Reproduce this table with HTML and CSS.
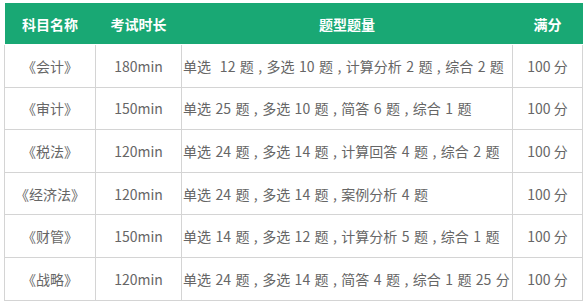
FILE: index.html
```html
<!DOCTYPE html>
<html lang="zh-CN">
<head>
<meta charset="utf-8">
<title>考试科目</title>
<link rel="stylesheet" href="styles.css">
</head>
<body>
<table class="exam">
  <colgroup>
    <col class="c1"><col class="c2"><col class="c3"><col class="c4">
  </colgroup>
  <thead>
    <tr><th>科目名称</th><th>考试时长</th><th>题型题量</th><th>满分</th></tr>
  </thead>
  <tbody>
    <tr><td>《会计》</td><td>180min</td><td class="types">单选&nbsp; 12 题 , 多选 10 题 , 计算分析 2 题 , 综合 2 题</td><td>100 分</td></tr>
    <tr><td>《审计》</td><td>150min</td><td class="types">单选 25 题 , 多选 10 题 , 简答 6 题 , 综合 1 题</td><td>100 分</td></tr>
    <tr><td>《税法》</td><td>120min</td><td class="types">单选 24 题 , 多选 14 题 , 计算回答 4 题 , 综合 2 题</td><td>100 分</td></tr>
    <tr><td>《经济法》</td><td>120min</td><td class="types">单选 24 题 , 多选 14 题 , 案例分析 4 题</td><td>100 分</td></tr>
    <tr><td>《财管》</td><td>150min</td><td class="types">单选 14 题 , 多选 12 题 , 计算分析 5 题 , 综合 1 题</td><td>100 分</td></tr>
    <tr><td>《战略》</td><td>120min</td><td class="types">单选 24 题 , 多选 14 题 , 简答 4 题 , 综合 1 题 25 分</td><td>100 分</td></tr>
  </tbody>
</table>
</body>
</html>
```

FILE: styles.css
```css
html, body {
  margin: 0;
  padding: 0;
  background: #ffffff;
}
body {
  padding: 3px 5px 0 4px;
  font-family: "Noto Sans CJK SC", "Noto Sans", sans-serif;
  font-size: 14px;
  color: #666666;
}
.exam {
  border-collapse: collapse;
  width: 578px;
  table-layout: fixed;
}
.c1 { width: 91px; }
.c2 { width: 86px; }
.c3 { width: 331px; }
.c4 { width: 70px; }
.exam th {
  background: #19a874;
  color: #ffffff;
  font-weight: bold;
  height: 41px;
  padding: 0;
  text-align: center;
  border: none;
  border-bottom: 1px solid #ffffff;
}
.exam td {
  height: 41.6px;
  padding: 0;
  text-align: center;
  border: 1px solid #d4d4d4;
  white-space: nowrap;
}
.exam td.types {
  text-align: left;
  padding-left: 1px;
  word-spacing: 1.3px;
}
```
